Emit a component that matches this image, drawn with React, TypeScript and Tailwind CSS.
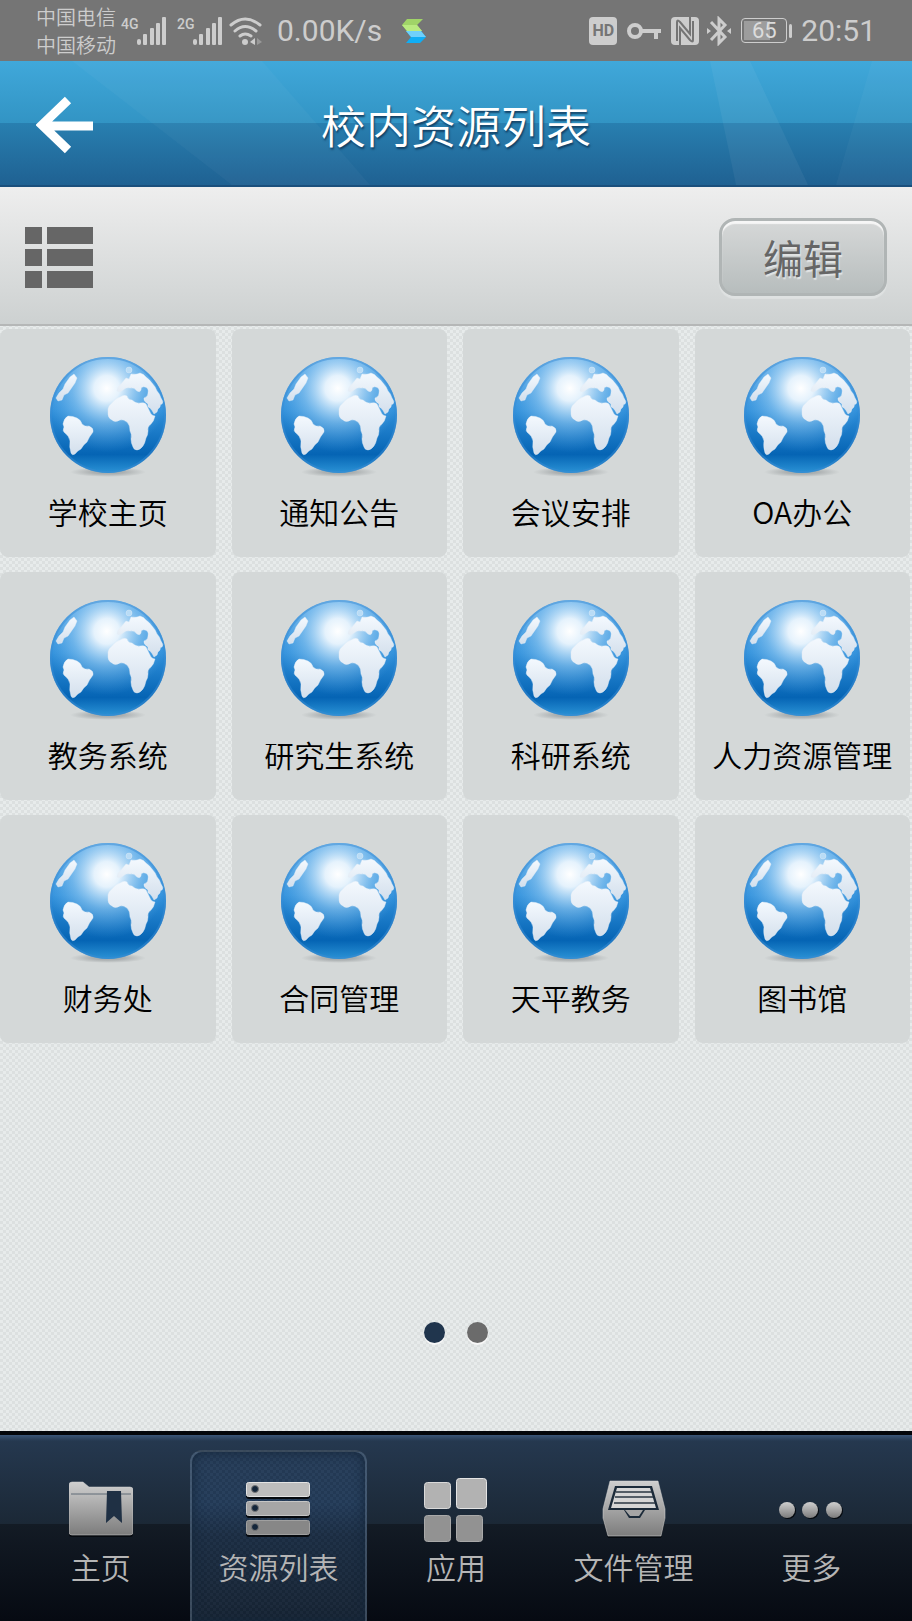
import { useState } from "react";

const resources = [
  "学校主页",
  "通知公告",
  "会议安排",
  "OA办公",
  "教务系统",
  "研究生系统",
  "科研系统",
  "人力资源管理",
  "财务处",
  "合同管理",
  "天平教务",
  "图书馆",
];

const AFRICA =
  "M58 52Q59 48 62 46Q66 41 70 40Q74 37 77 39Q78 43 82 43Q86 47 90 46Q94 45 96 47L98 51L101 57Q103 59 105 59Q104 64 101 67Q97 70 98 74Q98 78 96 81Q95 86 93 89Q90 93 87 93Q84 93 83 90Q81 86 81 82Q82 77 80 74Q80 68 77 65Q73 62 70 63Q65 66 62 63Q58 61 58 57Z";
const EUROPE =
  "M67 34Q67 30 71 27L76 21L79 22L81 17Q86 18 90 16Q94 17 96 20Q99 22 102 26Q105 29 107 34Q110 37 111 41Q114 45 112 47Q110 47 110 50Q107 52 107 55L104 57Q102 53 100 51Q97 50 98 47Q93 44 94 41Q98 40 98 36Q99 31 95 30Q91 29 91 33Q90 36 87 34Q84 30 80 31Q76 30 73 33Q70 36 67 34Z";
const SOUTH_AMERICA =
  "M13 67Q14 61 18 59Q23 59 27 61Q31 63 32 67Q35 70 39 69Q44 71 43 75Q39 80 37 85Q33 88 31 92Q27 94 25 97Q22 99 21 96Q19 90 20 84Q19 79 15 76Q12 74 14 70Z";

function GlobeDefs() {
  return (
    <svg width="0" height="0" className="absolute" aria-hidden="true">
      <defs>
        <linearGradient id="globe-base" x1="0" y1="0" x2="0" y2="1">
          <stop offset="0" stopColor="#4a9ee2" />
          <stop offset="0.45" stopColor="#3090db" />
          <stop offset="0.84" stopColor="#0564b4" />
          <stop offset="1" stopColor="#2b93d6" />
        </linearGradient>
        <radialGradient id="globe-shine" cx="0.49" cy="0.27" r="0.55">
          <stop offset="0" stopColor="#fff" />
          <stop offset="0.2" stopColor="#eef7fe" stopOpacity="0.95" />
          <stop offset="0.55" stopColor="#a5d5f7" stopOpacity="0.5" />
          <stop offset="1" stopColor="#6ab6ee" stopOpacity="0" />
        </radialGradient>
        <linearGradient id="globe-land" x1="0" y1="0" x2="0" y2="1">
          <stop offset="0" stopColor="#f4f9fe" />
          <stop offset="1" stopColor="#d3dfec" />
        </linearGradient>
        <radialGradient id="globe-shadow">
          <stop offset="0.4" stopColor="#8f9496" stopOpacity="0.6" />
          <stop offset="1" stopColor="#8f9496" stopOpacity="0" />
        </radialGradient>
      </defs>
    </svg>
  );
}

function Globe() {
  return (
    <svg viewBox="0 0 116 120" className="h-[120px] w-[116px]" aria-hidden="true">
      <ellipse cx="58" cy="115" rx="38" ry="5" fill="url(#globe-shadow)" />
      <circle cx="58" cy="58" r="58" fill="url(#globe-base)" />
      <circle cx="58" cy="58" r="58" fill="url(#globe-shine)" />
      <circle cx="58" cy="58" r="57" fill="none" stroke="#3a8cd4" strokeOpacity="0.5" strokeWidth="2" />
      <g fill="url(#globe-land)" stroke="#e4eef8" strokeOpacity="0.4" strokeWidth="1">
        <path d={EUROPE} />
        <path d={AFRICA} />
        <path d={SOUTH_AMERICA} />
        <path d="M20 20L24 17L27 21L25 26L18 36L14 38L12 43L8 44L6 41L9 36L13 32L15 27Z" />
        <circle cx="79" cy="13" r="3" fill="#b9dcf6" />
      </g>
    </svg>
  );
}

function Signal() {
  return (
    <svg viewBox="0 0 30 28" className="h-7 w-[30px]" fill="#cdcdcd" aria-hidden="true">
      <rect x="0" y="22" width="4" height="6" rx="2" />
      <rect x="6" y="17" width="4" height="11" rx="1" />
      <rect x="13" y="11" width="4" height="17" rx="1" />
      <rect x="19" y="6" width="4" height="22" rx="1" />
      <rect x="25" y="0" width="4" height="28" rx="1" />
    </svg>
  );
}

function StatusBar() {
  return (
    <div className="flex h-[61px] items-center justify-between bg-[#757575] pr-9 pl-9 text-[#cdcdcd]">
      <div className="flex items-center">
        <div className="w-20 pt-px text-[20px] leading-7 font-[350]">
          <div>中国电信</div>
          <div>中国移动</div>
        </div>
        <div className="flex items-start pl-[5px]">
          <span className="w-4 font-['Roboto'] text-sm leading-[14px] font-medium">4G</span>
          <Signal />
        </div>
        <div className="flex items-start pl-[10px]">
          <span className="w-4 font-['Roboto'] text-sm leading-[14px] font-medium">2G</span>
          <Signal />
        </div>
        <svg viewBox="0 0 34 28" className="ml-[6px] h-7 w-[34px]" fill="none" stroke="#cdcdcd" strokeWidth="3" strokeLinecap="round" aria-hidden="true">
          <path d="M2 8Q16 -4 31 8M6 14Q16 5 27 14M11 19Q16 15 22 19" />
          <circle cx="16" cy="25" r="3" fill="#cdcdcd" stroke="none" />
          <path d="M26 21V28L21 25Z" fill="#cdcdcd" stroke="none" />
          <path d="M28 21V28L33 25Z" fill="#999" stroke="none" />
        </svg>
        <span className="ml-[14px] font-['Roboto'] text-[30px] leading-8 font-normal">0.00K/s</span>
        <svg viewBox="0 0 24 24" className="ml-5 h-6 w-6" aria-hidden="true">
          <path d="M5 0H21L15 6L20 12H5L0 6Z" fill="#a0d468" />
          <path d="M0 6H15L20 12H5Z" fill="#b9ea80" />
          <path d="M4 12H19L24 18L18 24H4L9 18Z" fill="#10aef5" />
          <path d="M4 12H19L24 18H9Z" fill="#6fd0fb" />
        </svg>
      </div>
      <div className="flex items-center">
        <span className="flex h-7 w-7 items-center justify-center rounded-sm bg-[#cdcdcd] font-['Roboto'] text-base font-bold text-[#757575]">
          HD
        </span>
        <svg viewBox="0 0 34 18" className="ml-[10px] h-[18px] w-[34px]" fill="none" stroke="#cdcdcd" strokeWidth="4" aria-hidden="true">
          <circle cx="8" cy="9" r="6" />
          <path d="M14 9H34M29 9V17" />
        </svg>
        <svg viewBox="0 0 28 28" className="ml-[10px] h-7 w-7" aria-hidden="true">
          <rect width="28" height="28" rx="4" fill="#cdcdcd" />
          <path d="M6 24V5Q6 2 9 5L19 17V0M22 4V23Q22 26 19 23L9 11V28" fill="none" stroke="#757575" strokeWidth="2" />
        </svg>
        <svg viewBox="0 0 24 30" className="ml-2 h-[30px] w-6" fill="none" stroke="#cdcdcd" strokeWidth="3" aria-hidden="true">
          <path d="M4 6L18 21L12 27V3L18 9L4 24" />
          <path d="M0 12L4 15L0 18ZM24 12L20 15L24 18Z" fill="#cdcdcd" stroke="none" />
        </svg>
        <div className="ml-[10px] flex items-center gap-[2px]">
          <div className="flex h-[25px] w-[46px] rounded-sm border border-[#cdcdcd] p-[2px]">
            <div className="flex w-full items-center justify-center bg-linear-to-r from-[#9d9d9d] from-65% to-[#757575] to-65% font-['Roboto'] text-[22px] leading-5 font-normal text-[#dcdcdc]">
              65
            </div>
          </div>
          <div className="h-[14px] w-[3px] rounded-sm bg-[#cdcdcd]" />
        </div>
        <span className="ml-[9px] font-['Roboto'] text-[30px] leading-8 font-normal">20:51</span>
      </div>
    </div>
  );
}

function Header() {
  return (
    <header className="relative flex h-[126px] items-center justify-center border-b-2 border-[#1a4f7c] bg-[linear-gradient(#40a8da,#3294c4_50%,#287fb0_50%,#1f6192)] pt-[3px]">
      <svg viewBox="0 0 912 124" preserveAspectRatio="none" className="absolute inset-0 h-full w-full" fill="#fff" aria-hidden="true">
        <path d="M72 0L232 124H370L262 0Z" fillOpacity="0.03" />
        <path d="M710 0L736 124H808L750 0Z" fillOpacity="0.05" />
        <path d="M872 0L836 124H912V0Z" fillOpacity="0.03" />
      </svg>
      <button type="button" aria-label="返回" className="absolute left-9">
        <svg viewBox="0 0 58 58" className="h-[58px] w-[58px]" fill="none" stroke="#fff" strokeWidth="9" aria-hidden="true">
          <path d="M57 30H8M32 4L6 29L32 54" />
          <path d="M4 29L14 19V39Z" fill="#fff" stroke="none" />
        </svg>
      </button>
      <h1 className="relative text-[45px] leading-14 font-[350] text-white [text-shadow:1px_2px_2px_#123f63]">校内资源列表</h1>
    </header>
  );
}

function Toolbar() {
  return (
    <div className="flex h-[139px] items-center justify-between border-b-2 border-[#b5b7b7] bg-linear-to-b from-[#eeeeee] to-[#cdd1d1] px-[25px] pt-[3px]">
      <button type="button" aria-label="列表视图">
        <svg viewBox="0 0 68 61" className="h-[61px] w-[68px]" fill="#666" aria-hidden="true">
          <path d="M0 0H17V17H0ZM22 0H68V17H22ZM0 22H17V39H0ZM22 22H68V39H22ZM0 44H17V61H0ZM22 44H68V61H22Z" />
        </svg>
      </button>
      <button
        type="button"
        className="h-[78px] w-[168px] rounded-2xl border-3 border-[#b0b5b5] bg-linear-to-b from-[#d6d8d8] to-[#b7bdbd] text-[40px] leading-10 font-normal text-[#666] shadow-[inset_0_3px_1px_#f6f6f6,0_3px_1px_#dfe2e2] [text-shadow:1px_2px_1px_#e2e4e4]"
      >
        编辑
      </button>
    </div>
  );
}

function FolderIcon() {
  return (
    <svg viewBox="0 0 64 64" className="h-16 w-16" aria-hidden="true">
      <path d="M0 8Q0 5 3 5H14L20 10H61Q64 10 64 13V56Q64 59 61 59H3Q0 59 0 56Z" fill="#05090e" />
      <path d="M0 7Q0 4 3 4H14L20 9H61Q64 9 64 12V54Q64 57 61 57H3Q0 57 0 54Z" fill="url(#metal)" stroke="#d4d4d4" strokeOpacity="0.5" />
      <path d="M2 16H62" stroke="#5f6b77" strokeWidth="1" />
      <path d="M38 13H52L53 45L45 38L37 45Z" fill="#1f3044" />
    </svg>
  );
}

function ServerIcon() {
  return (
    <svg viewBox="0 0 64 64" className="h-16 w-16" aria-hidden="true">
      <g fill="#05090e">
        <rect y="6" width="64" height="15" rx="3" />
        <rect y="25" width="64" height="15" rx="3" />
        <rect y="44" width="64" height="15" rx="3" />
      </g>
      <rect x="0.5" y="4.5" width="63" height="14" rx="2" fill="#bdbdbd" stroke="#e4e4e4" />
      <rect x="0.5" y="23.5" width="63" height="14" rx="2" fill="#a6a6a6" stroke="#c6c6c6" />
      <rect x="0.5" y="42.5" width="63" height="14" rx="2" fill="#878787" stroke="#a0a0a0" />
      <g fill="#14263a" stroke="#777">
        <circle cx="9" cy="11" r="3.5" />
        <circle cx="9" cy="30" r="3.5" />
        <circle cx="9" cy="49" r="3.5" />
      </g>
    </svg>
  );
}

function AppsIcon() {
  return (
    <svg viewBox="0 0 64 64" className="h-16 w-16" aria-hidden="true">
      <rect x="0.5" y="4.5" width="26" height="26" rx="3" fill="#b2b2b2" stroke="#dadada" />
      <rect x="32.5" y="0.5" width="30" height="30" rx="3" fill="#b2b2b2" stroke="#e4e4e4" />
      <rect x="0.5" y="37.5" width="26" height="26" rx="3" fill="#929292" stroke="#a9a9a9" />
      <rect x="32.5" y="37.5" width="26" height="26" rx="3" fill="#929292" stroke="#a9a9a9" />
    </svg>
  );
}

function TrayIcon() {
  return (
    <svg viewBox="0 0 64 64" className="h-16 w-16" aria-hidden="true">
      <path d="M8 4H56L63 33V42L59 60H6L1 42V33Z" fill="#05090e" />
      <path d="M8 3H56L63 31V40L59 58H6L1 40V31Z" fill="url(#metal)" stroke="#dedede" strokeOpacity="0.5" />
      <path d="M13 8H50L57 32H43L38 40H27L22 32H6Z" fill="#1b2a39" />
      <path d="M15 10H48L54 30H9Z" fill="#d6d6d6" />
      <path d="M23 32H41L37 38H28Z" fill="#a5a5a5" />
      <path d="M14 14H50M13 19H51M12 25H53" stroke="#2a3642" strokeWidth="1.5" />
    </svg>
  );
}

function MoreIcon() {
  return (
    <svg viewBox="0 0 64 64" className="h-16 w-16" aria-hidden="true">
      <g fill="#05090e">
        <circle cx="9" cy="33" r="8" />
        <circle cx="32" cy="33" r="8" />
        <circle cx="56" cy="33" r="8" />
      </g>
      <g fill="url(#metal)">
        <circle cx="8" cy="32" r="8" />
        <circle cx="31" cy="32" r="8" />
        <circle cx="55" cy="32" r="8" />
      </g>
    </svg>
  );
}

const tabs = [
  { label: "主页", Icon: FolderIcon },
  { label: "资源列表", Icon: ServerIcon },
  { label: "应用", Icon: AppsIcon },
  { label: "文件管理", Icon: TrayIcon },
  { label: "更多", Icon: MoreIcon },
];

function TabBar() {
  const [active, setActive] = useState("资源列表");

  return (
    <nav className="border-t-4 border-[#03060b] bg-[linear-gradient(#3a5577,#25384f_6px,#1b2836_48%,#131b25_48%,#060a12)]">
      <svg width="0" height="0" className="absolute" aria-hidden="true">
        <linearGradient id="metal" x1="0" y1="0" x2="0" y2="1">
          <stop offset="0" stopColor="#cfcfcf" />
          <stop offset="1" stopColor="#7c7c7c" />
        </linearGradient>
      </svg>
      <div className="grid h-[186px] grid-cols-5 px-3 pt-[15px]">
        {tabs.map(({ label, Icon }) => (
          <button
            key={label}
            type="button"
            onClick={() => setActive(label)}
            className={
              active === label
                ? "flex flex-col items-center rounded-t-xl border-2 border-b-0 border-[#6f8296]/40 bg-[repeating-conic-gradient(#ffffff05_0_25%,#0000000d_0_50%),linear-gradient(#263c58,#243c5a_30%,#1c2e44_50%,#172535)] bg-size-[6px_6px,100%_100%] pt-[26px] shadow-[inset_0_0_12px_#14263a]"
                : "flex flex-col items-center border-2 border-b-0 border-transparent pt-[26px]"
            }
          >
            <Icon />
            <span className="mt-1 text-[30px] leading-10 whitespace-nowrap text-[#b5b5b5]">{label}</span>
          </button>
        ))}
      </div>
    </nav>
  );
}

export default function App() {
  return (
    <div className="flex min-h-screen flex-col bg-[#e3e7e7] bg-[repeating-conic-gradient(#dce0e0_0_25%,#e7ebeb_0_50%)] bg-size-[6px_6px] font-['Noto_Sans_CJK_SC',sans-serif] font-[350]">
      <StatusBar />
      <Header />
      <Toolbar />
      <main className="flex flex-1 flex-col justify-between">
        <GlobeDefs />
        <div className="grid grid-cols-4 gap-x-4 gap-y-[15px] pt-[3px] pr-[2px]">
          {resources.map((name) => (
            <a
              key={name}
              href="#"
              className="flex h-[228px] flex-col items-center rounded-lg bg-[#d4d8d8] pt-7 text-[30px] leading-10 whitespace-nowrap text-black"
            >
              <Globe />
              <span className="mt-[14px]">{name}</span>
            </a>
          ))}
        </div>
        <div className="flex justify-center gap-[22px] pb-[88px]">
          <span className="h-[21px] w-[21px] rounded-full bg-[#20354d] shadow-[0_2px_0_#f8f8f8]" />
          <span className="h-[21px] w-[21px] rounded-full bg-[#6b6b6b] shadow-[0_2px_0_#f8f8f8]" />
        </div>
      </main>
      <TabBar />
    </div>
  );
}
